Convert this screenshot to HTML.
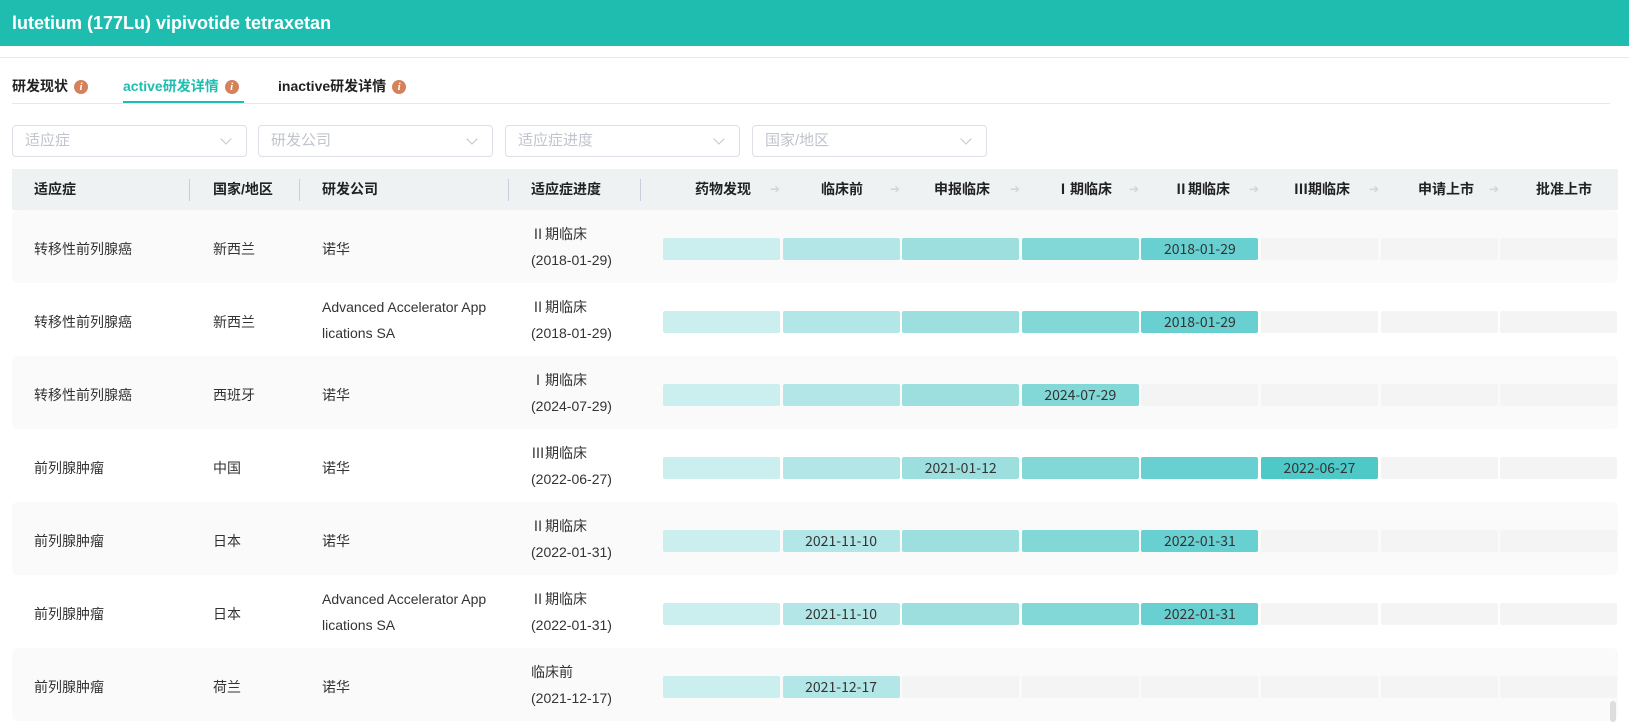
<!DOCTYPE html>
<html><head><meta charset="utf-8"><style>
*{margin:0;padding:0;box-sizing:border-box}
body{width:1629px;height:722px;overflow:hidden;background:#fff;font-family:"Liberation Sans","Noto Sans CJK SC",sans-serif;color:#333;position:relative}
.top{position:absolute;left:0;top:0;width:1629px;height:46px;background:#1fbdb0;color:#fff;font-weight:bold;font-size:18px;line-height:46px;padding-left:12px}
.l1{position:absolute;left:0;top:57px;width:1629px;height:1px;background:#e8e8e8}
.tab{position:absolute;top:74px;font-size:14px;font-weight:bold;color:#222;line-height:24px}
.tab.on{color:#1fbdb0}
.i{display:inline-block;width:14px;height:14px;border-radius:50%;background:#d4825c;color:#fff;font-size:11px;font-style:italic;font-family:"Liberation Serif",serif;text-align:center;line-height:14px;margin-left:6px;vertical-align:1px}
.ul{position:absolute;left:123px;top:101px;width:121px;height:3px;background:#1fbdb0}
.l2{position:absolute;left:12px;top:103px;width:1598px;height:1px;background:#e8e8e8}
.f{position:absolute;top:125px;width:235px;height:32px;border:1px solid #dcdfe6;border-radius:4px;font-size:15px;color:#c0c4cc;line-height:30px;padding-left:12px}
.f:after{content:"";position:absolute;right:16px;top:9px;width:7px;height:7px;border-right:1px solid #c0c4cc;border-bottom:1px solid #c0c4cc;transform:rotate(45deg)}
.hd{position:absolute;left:12px;top:169px;width:1606px;height:41px;background:#eef2f3;font-size:14px;font-weight:bold;color:#222}
.hd span{position:absolute;top:0;line-height:41px}
.dv{position:absolute;top:10px;width:1px;height:22px;background:#ccd}
.ar{position:absolute;top:0;line-height:41px;color:#d4d4d4;font-weight:normal;font-size:12px}
.row{position:absolute;left:12px;width:1606px;height:73px;border-radius:6px;font-size:14px;color:#333}
.row.g{background:#fafafa}
.row .t{position:absolute;top:3px;line-height:73px}
.row .m{position:absolute;top:11px;line-height:26px}
.b{position:absolute;height:22px;border-radius:2px;background:#f4f4f4;font-size:14px;text-align:center;line-height:22px;color:#333;font-family:"Noto Sans CJK SC","Liberation Sans",sans-serif}
.c1{background:#cbeeee}.c2{background:#b3e6e6}.c3{background:#9ddfdf}.c4{background:#82d7d7}.c5{background:#68d0d0}.c6{background:#4fc9c8}
.sb{position:absolute;left:1610px;top:701px;width:6px;height:21px;border-radius:3px;background:#ddd}
</style></head><body>
<div class="top">lutetium (177Lu) vipivotide tetraxetan</div>
<div class="l1"></div>
<div class="tab" style="left:12px">研发现状<span class="i">i</span></div>
<div class="tab on" style="left:123px">active研发详情<span class="i">i</span></div>
<div class="tab" style="left:278px">inactive研发详情<span class="i">i</span></div>
<div class="ul"></div><div class="l2"></div>
<div class="f" style="left:12px">适应症</div>
<div class="f" style="left:258px">研发公司</div>
<div class="f" style="left:505px">适应症进度</div>
<div class="f" style="left:752px">国家/地区</div>
<div class="hd">
<span style="left:22px">适应症</span><div class="dv" style="left:177px"></div>
<span style="left:201px">国家/地区</span><div class="dv" style="left:287px"></div>
<span style="left:310px">研发公司</span><div class="dv" style="left:496px"></div>
<span style="left:519px">适应症进度</span><div class="dv" style="left:628px"></div>
<span style="left:683px">药物发现</span><span class="ar" style="left:758px">➔</span>
<span style="left:809px">临床前</span><span class="ar" style="left:878px">➔</span>
<span style="left:922px">申报临床</span><span class="ar" style="left:998px">➔</span>
<span style="left:1044px">Ⅰ期临床</span><span class="ar" style="left:1117px">➔</span>
<span style="left:1162px">Ⅱ期临床</span><span class="ar" style="left:1237px">➔</span>
<span style="left:1282px">Ⅲ期临床</span><span class="ar" style="left:1357px">➔</span>
<span style="left:1406px">申请上市</span><span class="ar" style="left:1477px">➔</span>
<span style="left:1524px">批准上市</span>
</div>
<div id="rows"></div>
<div class="sb"></div>
<script>
var data=[
["转移性前列腺癌","新西兰","诺华","Ⅱ期临床","(2018-01-29)",5,{5:"2018-01-29"}],
["转移性前列腺癌","新西兰","Advanced Accelerator App<br>lications SA","Ⅱ期临床","(2018-01-29)",5,{5:"2018-01-29"}],
["转移性前列腺癌","西班牙","诺华","Ⅰ期临床","(2024-07-29)",4,{4:"2024-07-29"}],
["前列腺肿瘤","中国","诺华","Ⅲ期临床","(2022-06-27)",6,{3:"2021-01-12",6:"2022-06-27"}],
["前列腺肿瘤","日本","诺华","Ⅱ期临床","(2022-01-31)",5,{2:"2021-11-10",5:"2022-01-31"}],
["前列腺肿瘤","日本","Advanced Accelerator App<br>lications SA","Ⅱ期临床","(2022-01-31)",5,{2:"2021-11-10",5:"2022-01-31"}],
["前列腺肿瘤","荷兰","诺华","临床前","(2021-12-17)",2,{2:"2021-12-17"}]];
var h="";
data.forEach(function(d,i){
var top=210+i*73;
h+='<div class="row'+(i%2==0?' g':'')+'" style="top:'+top+'px">';
h+='<span class="t" style="left:22px">'+d[0]+'</span><span class="t" style="left:201px">'+d[1]+'</span>';
if(d[2].indexOf("<br>")>0)h+='<span class="m" style="left:310px">'+d[2]+'</span>';else h+='<span class="t" style="left:310px">'+d[2]+'</span>';
h+='<span class="m" style="left:519px">'+d[3]+'<br>'+d[4]+'</span>';
for(var k=1;k<=8;k++){var x=651+(k-1)*119.6;var c=k<=d[5]?'c'+k:'';
h+='<div class="b '+c+'" style="left:'+x+'px;width:117px;top:28px">'+(d[6][k]||'')+'</div>';}
h+='</div>';});
document.getElementById("rows").innerHTML=h;
</script>
</body></html>
